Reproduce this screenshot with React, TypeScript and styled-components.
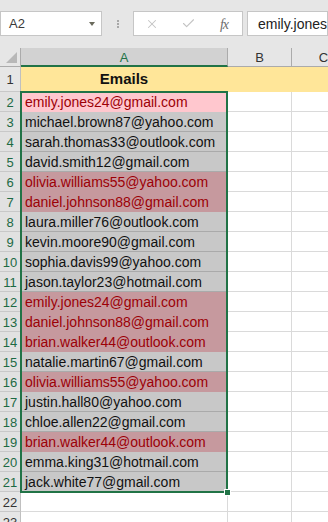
import styled, { createGlobalStyle } from "styled-components";
import { X, Check } from "lucide-react";

const GlobalStyle = createGlobalStyle`
  html, body {
    margin: 0;
    padding: 0;
    background: #ffffff;
  }
  body {
    font-family: "Liberation Sans", Arial, sans-serif;
  }
`;

const emails = [
  "emily.jones24@gmail.com",
  "michael.brown87@yahoo.com",
  "sarah.thomas33@outlook.com",
  "david.smith12@gmail.com",
  "olivia.williams55@yahoo.com",
  "daniel.johnson88@gmail.com",
  "laura.miller76@outlook.com",
  "kevin.moore90@gmail.com",
  "sophia.davis99@yahoo.com",
  "jason.taylor23@hotmail.com",
  "emily.jones24@gmail.com",
  "daniel.johnson88@gmail.com",
  "brian.walker44@outlook.com",
  "natalie.martin67@gmail.com",
  "olivia.williams55@yahoo.com",
  "justin.hall80@yahoo.com",
  "chloe.allen22@gmail.com",
  "brian.walker44@outlook.com",
  "emma.king31@hotmail.com",
  "jack.white77@gmail.com",
];

const GRID = "#dadada";
const GREEN = "#217346";

const Window = styled.div`
  width: 328px;
  height: 522px;
  overflow: hidden;
  background: #fff;
`;

const FormulaBar = styled.div`
  height: 48px;
  background: #e6e6e6;
  display: flex;
  align-items: center;
  padding-bottom: 1px;
  box-sizing: border-box;
`;

const Field = styled.div<{ $w?: number; $gap?: number }>`
  height: 25px;
  box-sizing: border-box;
  background: #fff;
  border: 1px solid #c6c6c6;
  display: flex;
  align-items: center;
  flex: ${(p) => (p.$w ? `0 0 ${p.$w}px` : "1 1 0")};
  min-width: 0;
  overflow: hidden;
  margin-left: ${(p) => p.$gap ?? 0}px;
`;

const NameText = styled.span`
  flex: 1;
  padding-left: 8px;
  font-size: 13px;
  color: #3a3a3a;
`;

const Caret = styled.span`
  width: 0;
  height: 0;
  margin-right: 6px;
  border-left: 3px solid transparent;
  border-right: 3px solid transparent;
  border-top: 4px solid #6a6a5c;
`;

const Grip = styled.div`
  flex: 0 0 31px;
  display: flex;
  flex-direction: column;
  align-items: center;
  gap: 1px;
`;

const Dot = styled.span`
  width: 2px;
  height: 2px;
  background: #a8a8a8;
`;

const Action = styled.span`
  width: 36px;
  display: flex;
  justify-content: center;
  align-items: center;
  color: #c4c4c4;
`;

const Fx = styled.span`
  width: 36px;
  text-align: center;
  font-family: "Liberation Serif", serif;
  font-style: italic;
  font-size: 14px;
  color: #6e6e6e;
  padding-top: 2px;
  letter-spacing: -1px;
`;

const FormulaText = styled.span`
  padding-left: 10px;
  font-size: 14px;
  color: #222;
  white-space: nowrap;
`;

const Sheet = styled.div`
  position: relative;
`;

const Grid = styled.div`
  display: grid;
  grid-template-columns: 21px 207px 64px 64px;
  grid-template-rows: 19px 25px repeat(22, 20px);
`;

const Corner = styled.div`
  position: relative;
  background: #e6e6e6;
  border-right: 1px solid #ababab;
  border-bottom: 1px solid #ababab;
  box-sizing: border-box;

  &::after {
    content: "";
    position: absolute;
    right: 3px;
    bottom: 3px;
    width: 0;
    height: 0;
    border-left: 11px solid transparent;
    border-bottom: 11px solid #b8b8b8;
  }
`;

const ColHead = styled.div<{ $active?: boolean }>`
  box-sizing: border-box;
  background: ${(p) => (p.$active ? "#d2d2d2" : "#e6e6e6")};
  color: ${(p) => (p.$active ? GREEN : "#333")};
  border-right: 1px solid #ababab;
  border-bottom: ${(p) => (p.$active ? `2px solid ${GREEN}` : "1px solid #ababab")};
  font-size: 13px;
  display: flex;
  align-items: center;
  justify-content: center;
  padding-top: ${(p) => (p.$active ? "1px" : "0")};
`;

const RowHead = styled.div<{ $active?: boolean }>`
  box-sizing: border-box;
  background: ${(p) => (p.$active ? "#e1e1e1" : "#e6e6e6")};
  color: ${(p) => (p.$active ? "#1d6a44" : "#333")};
  border-right: 1px solid #c0c0c0;
  border-bottom: 1px solid #c8c8c8;
  font-size: 13px;
  display: flex;
  align-items: center;
  justify-content: center;
  padding-top: 1px;
`;

const Cell = styled.div<{
  $fill?: string;
  $line?: string;
  $color?: string;
  $bold?: boolean;
  $center?: boolean;
}>`
  box-sizing: border-box;
  background: ${(p) => p.$fill ?? "#fff"};
  border-right: 1px solid ${(p) => p.$fill ?? GRID};
  border-bottom: 1px solid ${(p) => p.$line ?? p.$fill ?? GRID};
  color: ${(p) => p.$color ?? "#111"};
  font-size: ${(p) => (p.$bold ? "15px" : "14px")};
  font-weight: ${(p) => (p.$bold ? 700 : 400)};
  padding-left: ${(p) => (p.$center ? "0" : "4px")};
  line-height: 20px;
  white-space: nowrap;
  overflow: hidden;
  display: flex;
  align-items: center;
  justify-content: ${(p) => (p.$center ? "center" : "flex-start")};
`;

const SelectionFrame = styled.div`
  position: absolute;
  left: 20px;
  top: 43px;
  width: 208px;
  height: 402px;
  box-sizing: border-box;
  border: 2px solid ${GREEN};
  pointer-events: none;
`;

const FillHandle = styled.div`
  position: absolute;
  right: -5px;
  bottom: -5px;
  width: 7px;
  height: 7px;
  box-sizing: border-box;
  background: ${GREEN};
  border: 1px solid #fff;
`;

const YELLOW = "#ffe699";
const PINK = "#ffc7ce";
const PINK_SEL = "#c6999e";
const GRAY_SEL = "#c8c8c8";
const DUP_TEXT = "#9c0006";

function App() {
  const counts: Record<string, number> = {};
  emails.forEach((e) => (counts[e] = (counts[e] || 0) + 1));

  return (
    <>
      <GlobalStyle />
      <Window>
        <FormulaBar>
          <Field $w={102}>
            <NameText>A2</NameText>
            <Caret />
          </Field>
          <Grip>
            <Dot />
            <Dot />
            <Dot />
          </Grip>
          <Field $w={110}>
            <Action>
              <X size={14} strokeWidth={1.8} />
            </Action>
            <Action>
              <Check size={15} strokeWidth={1.8} />
            </Action>
            <Fx>fx</Fx>
          </Field>
          <Field $gap={4}>
            <FormulaText>emily.jones24@gmail.com</FormulaText>
          </Field>
        </FormulaBar>
        <Sheet>
          <Grid>
            <Corner />
            <ColHead $active>A</ColHead>
            <ColHead>B</ColHead>
            <ColHead>C</ColHead>

            <RowHead>1</RowHead>
            <Cell $fill={YELLOW} $bold $center>
              Emails
            </Cell>
            <Cell $fill={YELLOW} />
            <Cell $fill={YELLOW} />

            {emails.map((email, i) => {
              const dup = counts[email] > 1;
              const activeCell = i === 0;
              const fill = activeCell ? PINK : dup ? PINK_SEL : GRAY_SEL;
              return [
                <RowHead key={`h${i}`} $active>
                  {i + 2}
                </RowHead>,
                <Cell
                  key={`a${i}`}
                  $fill={fill}
                  $line={dup ? fill : "#aaaaaa"}
                  $color={dup ? DUP_TEXT : "#111"}
                >
                  {email}
                </Cell>,
                <Cell key={`b${i}`} />,
                <Cell key={`c${i}`} />,
              ];
            })}

            {[22, 23].map((n) => [
              <RowHead key={`h${n}`}>{n}</RowHead>,
              <Cell key={`a${n}`} />,
              <Cell key={`b${n}`} />,
              <Cell key={`c${n}`} />,
            ])}
          </Grid>
          <SelectionFrame>
            <FillHandle />
          </SelectionFrame>
        </Sheet>
      </Window>
    </>
  );
}

export default App;
